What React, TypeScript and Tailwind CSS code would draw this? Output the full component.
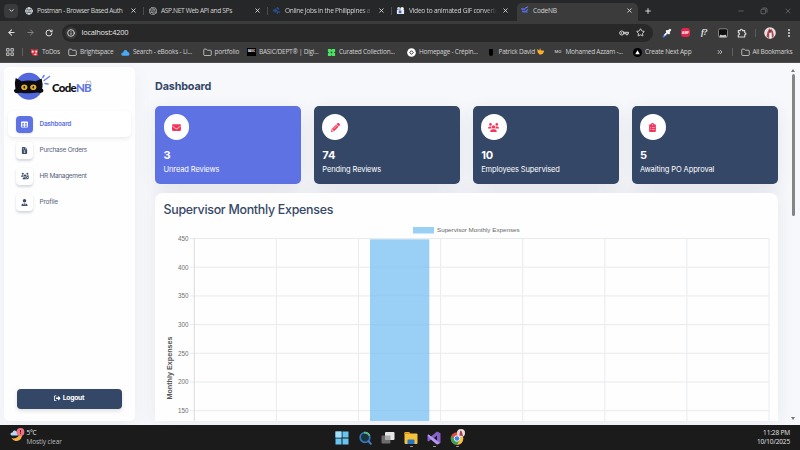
import type { ReactNode } from "react";
import {
  FaEnvelope, FaPencil, FaUsers, FaClipboardList, FaTable, FaFileInvoiceDollar,
  FaUsersGear, FaUserTie, FaRightFromBracket,
} from "react-icons/fa6";
import { SiOpenai } from "react-icons/si";
import {
  ArrowLeft, ArrowRight, ChevronDown, ChevronsRight, EllipsisVertical, Folder, Globe, Info,
  Minus, Plus, RotateCw, Star, X,
} from "lucide-react";

type TabProps = { icon: ReactNode; title: string; fade?: boolean; spacing: string };

function Tab({ icon, title, fade, spacing }: TabProps) {
  return (
    <div className="flex h-full w-[124px] shrink-0 items-center pr-[6px] pl-[5px]">
      <div className="flex size-[9px] shrink-0 items-center justify-center">{icon}</div>
      <div
        className={`ml-[4px] w-[88px] text-[6.6px] leading-[10px] whitespace-nowrap text-[#d4d4d4] ${spacing} ${fade ? "[mask-image:linear-gradient(to_right,black_76px,transparent_88px)]" : ""}`}
      >
        {title}
      </div>
      <X className="ml-auto size-[7px] shrink-0 text-[#e5e5e5]" strokeWidth={2.8} />
    </div>
  );
}

function CatFavicon() {
  return (
    <svg viewBox="0 0 10 10" className="size-[9px]">
      <path d="M1 2.500h6.500L5 4.500H2zM2 5.200h5.500L9 7.300H3z" fill="#5468e8" />
      <path d="M6 2l3-1M7 5l2-1" stroke="#7b8cff" strokeWidth="1" />
    </svg>
  );
}

function TabDivider() {
  return <div className="-mr-px h-[8px] w-px bg-[#4c4c4c]" />;
}

function TabStrip() {
  return (
    <div className="flex h-[21px] items-center bg-[#262728] font-['Open_Sans',sans-serif]">
      <div className="ml-[4px] flex size-[14px] shrink-0 items-center justify-center rounded-[4px] bg-[#3a3b3c]">
        <ChevronDown className="size-[7px] text-[#e3e3e3]" strokeWidth={3} />
      </div>
      <div className="ml-[1px] flex h-full w-[498px] shrink-0 items-center">
        <Tab spacing="tracking-[-0.350px]" title="Postman - Browser Based Auth" icon={<Globe className="size-[8px] text-[#d5dce4]" strokeWidth={3} />} />
        <TabDivider />
        <Tab spacing="tracking-[-0.340px]" title="ASP.NET Web API and SPs" icon={<SiOpenai className="size-[8px] text-[#d0d0d0]" />} />
        <TabDivider />
        <Tab
          fade
          spacing="tracking-[-0.300px]"
          title="Online Jobs in the Philippines a"
          icon={
            <svg viewBox="0 0 10 10" className="size-[9px]"><path d="M1 5h3M3 3l2 2-2 2M6 1v3M8 3H6M6 9V6l3 1" stroke="#284b8c" strokeWidth="1.500" fill="none" /></svg>
          }
        />
        <TabDivider />
        <Tab
          fade
          spacing="tracking-[-0.240px]"
          title="Video to animated GIF converte"
          icon={
            <svg viewBox="0 0 10 10" className="size-[9px]"><rect x="1" y="4" width="8" height="5" rx="1" fill="#e8edf5" /><circle cx="3" cy="2.600" r="1.600" fill="#c6d2e4" /><circle cx="6.800" cy="3" r="2" fill="#f5f5f5" /><path d="M3 5h3v3H3z" fill="#3c6fb5" /></svg>
          }
        />
      </div>
      <div className="mt-[3px] h-[18px] w-[121px] shrink-0 rounded-t-[5px] bg-[#3b3b3c]">
        <div className="-mt-[1.500px] -ml-[2px] h-[18px]">
          <Tab spacing="tracking-[-0.200px]" title="CodeNB" icon={<CatFavicon />} />
        </div>
      </div>
      <Plus className="ml-[6px] size-[8px] text-[#e3e3e3]" strokeWidth={2.800} />
      <Minus className="ml-auto size-[8px] text-[#777]" strokeWidth={2} />
      <svg viewBox="0 0 8 8" className="ml-[15px] size-[8px]" fill="none" stroke="#777" strokeWidth=".8">
        <rect x="1" y="2.200" width="4.600" height="4.600" rx="1" /><path d="M2.500 1h3Q7 1 7 2.500v3" />
      </svg>
      <X className="mr-[8px] ml-[16px] size-[8px] text-[#777]" strokeWidth={2} />
    </div>
  );
}

function Toolbar() {
  return (
    <div className="flex h-[23px] items-center bg-[#3b3b3c] font-['Open_Sans',sans-serif]">
      <ArrowLeft className="ml-[7px] size-[9px] text-[#dedede]" strokeWidth={2.800} />
      <ArrowRight className="ml-[10px] size-[9px] text-[#858585]" strokeWidth={2.600} />
      <RotateCw className="ml-[10px] size-[8px] text-[#dedede]" strokeWidth={3} />
      <div className="ml-[9px] flex h-[18px] w-[591px] shrink-0 items-center rounded-full bg-[#282828]">
        <div className="ml-[3px] flex size-[12px] items-center justify-center rounded-full bg-[#3a3a3b]">
          <Info className="size-[8px] text-[#dedede]" strokeWidth={2.600} />
        </div>
        <span className="mt-[1px] ml-[4.500px] text-[7.400px] tracking-[-0.210px] text-[#e4e4e4]">localhost:4200</span>
        <svg viewBox="0 0 22 12" className="ml-auto h-[6px] w-[10px]" fill="none" stroke="#d6d6d6" strokeWidth="2.200">
          <circle cx="6" cy="6" r="4.500" /><circle cx="6" cy="6" r="0.800" /><path d="M10.500 4.500H21v3h-2v2.500h-3V7.500h-5.500" />
        </svg>
        <Star className="mr-[8px] ml-[7px] size-[9px] text-[#d8d8d8]" strokeWidth={2.500} />
      </div>
      <svg viewBox="0 0 10 10" className="ml-[9px] size-[10px]" fill="none" strokeLinecap="round">
        <path d="M1.700 8.500L5.500 4.700" stroke="#4a78dc" strokeWidth="2.400" />
        <path d="M2.800 7L5.500 4.300" stroke="#fff" strokeWidth="1.400" />
        <path d="M5 3.200L6.900 5.100M6.300 3.700l1.700-1.700" stroke="#f6f6f6" strokeWidth="2.400" />
      </svg>
      <div className="ml-[9px] flex size-[9px] items-center justify-center rounded-[3px] bg-[#e2264c] text-[3.500px] font-bold text-white">ABP</div>
      <span className="ml-[11px] w-[9px] font-['Liberation_Serif',serif] text-[8.500px] leading-none font-bold tracking-[-0.500px] text-[#e2e2e2] italic">f?</span>
      <svg viewBox="0 0 10 10" className="ml-[8px] size-[10px]">
        <rect x="0.500" y="0.800" width="9" height="8.500" rx="1.500" fill="#101010" stroke="#999" strokeWidth="0.800" /><path d="M1.500 9.300c0-4 2-2 3.500-2s3.500-2 3.500 2z" fill="#c4c4c4" />
      </svg>
      <svg viewBox="0 0 10 10" className="ml-[9px] size-[10px]" fill="none" stroke="#dcdcdc" strokeWidth="1.100" strokeLinejoin="round">
        <path d="M1.300 2.600H3.200Q3.300 1.200 4.400 1.200T5.600 2.600H7.700V4.700Q9 4.800 9 5.800T7.700 6.900V9H1.300V7Q2.500 6.900 2.500 5.800T1.300 4.600z" />
      </svg>
      <div className="ml-[8px] h-[8px] w-px bg-[#5c5c5c]" />
      <Avatar />
      <EllipsisVertical className="ml-[8px] size-[10px] text-[#dedede]" strokeWidth={2.800} />
    </div>
  );
}

function Avatar() {
  return (
    <svg viewBox="0 0 12 12" className="ml-[8px] size-[12px]">
      <circle cx="6" cy="6" r="5.800" fill="#eadfdf" />
      <path d="M2.500 9.500L3.500 5 5.500 1l1 4-1 6.400zM7 1.500l2 3 .800 4.500-1.800 2.300z" fill="#b5444f" />
      <path d="M5.300 6h2v5.400h-2z" fill="#f8f5f4" />
      <circle cx="6.300" cy="4" r="1.400" fill="#7d3a3c" />
    </svg>
  );
}

function Bookmark({ icon, children, width, tracking }: { icon: ReactNode; children: ReactNode; width: string; tracking: string }) {
  return (
    <div className={`flex shrink-0 items-center ${width}`}>
      <div className="flex size-[9px] shrink-0 items-center justify-center">{icon}</div>
      <span className={`ml-[3px] text-[6.500px] leading-[10px] whitespace-nowrap text-[#d2d2d2] ${tracking}`}>{children}</span>
    </div>
  );
}

function BookmarkBar() {
  const folder = <Folder className="size-[9px] text-[#d0d0d0]" strokeWidth={2.200} />;
  return (
    <div className="flex h-[19px] items-center border-b border-[#4d4d50] bg-[#3b3b3c] pb-[1.500px] font-['Open_Sans',sans-serif]">
      <svg viewBox="0 0 8 8" className="ml-[6px] size-[8px] shrink-0" fill="none" stroke="#cfcfcf" strokeWidth="0.900">
        <path d="M.6.6h2.500v2.500H.6zM4.900.6h2.500v2.500H4.900zM.6 4.900h2.500v2.500H.6zM4.900 4.900h2.500v2.500H4.900z" />
      </svg>
      <div className="mr-[7px] ml-[8px] h-[8px] w-px shrink-0 bg-[#606060]" />
      <Bookmark width="w-[38px]" tracking="tracking-[-0.300px]" icon={<svg viewBox="0 0 10 10" className="size-[9px]"><path d="M1 1l4 1 4-1-1 4 1 3-3 1-3-1-2-3z" fill="#e33340" /><path d="M2 3h2v2H2zM6 3h2v2H6zM4 7l3-1v2z" fill="#fff" /></svg>}>ToDos</Bookmark>
      <Bookmark width="w-[53px]" tracking="tracking-[-0.220px]" icon={folder}>Brightspace</Bookmark>
      <Bookmark width="w-[81.500px]" tracking="tracking-[-0.210px]" icon={<svg viewBox="0 0 10 10" className="size-[9px]"><path d="M2 8.500C-1 8 .5 4.500 2.500 5 3 1.500 7 1.500 7.300 4.500 10 4.500 10 8.500 8 8.500z" fill="#4aa9f4" /></svg>}>Search - eBooks - Li...</Bookmark>
      <Bookmark width="w-[44.500px]" tracking="tracking-[-0.150px]" icon={folder}>portfolio</Bookmark>
      <Bookmark width="w-[80px]" tracking="tracking-[-0.260px]" icon={<div className="flex h-[8px] w-[9px] items-center justify-center bg-black text-[2.500px] font-bold text-white">BASIC</div>}>BASIC/DEPT® | Digi...</Bookmark>
      <Bookmark width="w-[80px]" tracking="tracking-[-0.250px]" icon={<svg viewBox="0 0 10 10" className="size-[9px]"><path d="M1 1h3.500v1h1V1H9v3.500H8v1h1V9H5.500V8h-1v1H1V5.500h1v-1H1z" fill="#4ce363" /><circle cx="5" cy="5" r="1" fill="#225c2c" /></svg>}>Curated Collection...</Bookmark>
      <Bookmark width="w-[79.500px]" tracking="tracking-[-0.250px]" icon={<svg viewBox="0 0 10 10" className="size-[9px]"><circle cx="5" cy="5" r="4.800" fill="#fff" /><path d="M3 5l2-2 2 2-2 2z" fill="none" stroke="#222" /></svg>}>Homepage - Crépin...</Bookmark>
      <Bookmark width="w-[67px]" tracking="tracking-[-0.240px]" icon={<div className="h-[7px] w-[4px] rounded-b-[2px] bg-black" />}>
        Patrick David
        <svg viewBox="0 0 10 10" className="ml-[2.500px] inline size-[7px] align-[-1px]"><path d="M0 1.500l3 2 1.500-3.500 1 3.500h4l.500 2-2 3-4 1-3-3z" fill="#f4b02e" /></svg>
      </Bookmark>
      <Bookmark width="w-[79.500px]" tracking="tracking-[-0.230px]" icon={<span className="text-[4px] font-bold text-[#b9b9b9]">MO</span>}>Mohamed Azzam -...</Bookmark>
      <Bookmark width="w-[74px]" tracking="tracking-[-0.220px]" icon={<svg viewBox="0 0 10 10" className="size-[9px]"><circle cx="5" cy="5" r="5" fill="#000" /><path d="M5 2.500L7.500 7h-5z" fill="#fff" /></svg>}>Create Next App</Bookmark>
      <ChevronsRight className="ml-auto size-[8px] shrink-0 text-[#d0d0d0]" strokeWidth={2.500} />
      <div className="mr-[8px] ml-[8px] h-[8px] w-px shrink-0 bg-[#606060]" />
      <Bookmark width="w-[59.500px]" tracking="tracking-[-0.270px]" icon={folder}>All Bookmarks</Bookmark>
    </div>
  );
}

function Logo() {
  return (
    <div className="ml-[9px] flex h-[34px] items-start pt-[3px]">
      <svg viewBox="0 0 38 30" className="h-[30px] w-[38px] shrink-0">
        <circle cx="16" cy="16.300" r="13.500" fill="#5468dd" />
        <path d="M2.700 8l6 3.200q7-1.500 14 0l6-2.700q1.300 5 .300 10.500h1q1 3-1 3.500-2 .800-4 0-9 1.500-18 .300Q3 24 1.500 22q-1.500-2 1-3Q1 13 2.700 8z" fill="#0b0b10" />
        <ellipse cx="11.300" cy="17.200" rx="3.100" ry="2.800" fill="#e0ab30" /><ellipse cx="20.300" cy="17.200" rx="3.100" ry="2.800" fill="#e0ab30" />
        <ellipse cx="11.300" cy="17.200" rx=".7" ry="1.300" fill="#111" /><ellipse cx="20.300" cy="17.200" rx=".7" ry="1.300" fill="#111" />
        <path d="M29.800 7.500l1.200-2M31 10.500l5.500-4M32 13.500l3 .600" stroke="#6f80e8" strokeWidth="1.500" strokeLinecap="round" />
      </svg>
      <div className="relative mt-[11px] ml-[1px] font-['Lato',sans-serif] text-[11.500px] leading-[14px] font-black tracking-[-0.700px] text-[#101014]">
        Code<span className="text-[#6377e4]">NB</span>
        <svg viewBox="0 0 8 6" className="absolute -top-[1px] -right-[1px] h-[5px] w-[7px]" fill="none" stroke="#8a8a9c" strokeWidth=".7">
          <path d="M1 4L2 1l1.500 1h1L6 1l1 3M7 4v2" />
        </svg>
      </div>
    </div>
  );
}

function NavItem({ icon, label, active, tracking }: { icon: ReactNode; label: string; active?: boolean; tracking: string }) {
  return (
    <div className={`flex h-[26px] items-center rounded-[5px] pl-[8px] ${active ? "bg-white shadow-[0_2px_4px_rgba(40,50,80,0.090)]" : ""}`}>
      <div className={`flex size-[17px] items-center justify-center rounded-[4px] ${active ? "bg-[#5e72e4] text-white shadow-sm" : "bg-white text-[#3a4a69] shadow-[0_1.500px_2.500px_rgba(30,40,70,0.180)]"}`}>
        {icon}
      </div>
      <span className={`mt-[1.500px] ml-[6.500px] text-[6.500px] ${tracking} ${active ? "font-semibold text-[#5e72e4]" : "text-[#55617a]"}`}>{label}</span>
    </div>
  );
}

function Sidebar() {
  return (
    <aside className="mt-[4px] ml-[4px] flex h-[354px] w-[130.500px] shrink-0 flex-col rounded-[5px] bg-[#fefefe] shadow-[0_6px_20px_rgba(50,60,100,0.050)]">
      <Logo />
      <nav className="mx-[4px] mt-[10px] flex flex-col">
        <NavItem active tracking="tracking-[-0.300px]" label="Dashboard" icon={<FaTable className="size-[7px]" />} />
        <NavItem tracking="tracking-[-0.270px]" label="Purchase Orders" icon={<FaFileInvoiceDollar className="size-[7px]" />} />
        <NavItem tracking="tracking-[-0.310px]" label="HR Management" icon={<FaUsersGear className="size-[8px]" />} />
        <NavItem tracking="tracking-[-0.190px]" label="Profile" icon={<FaUserTie className="size-[7px]" />} />
      </nav>
      <button className="mx-[12.500px] mt-auto mb-[12.500px] flex h-[20px] items-center justify-center gap-[2px] rounded-[4px] bg-[#344767] text-[6.800px] font-bold tracking-[-0.300px] text-white shadow-[0_2px_4px_rgba(0,0,0,0.120)]">
        <FaRightFromBracket className="size-[6.500px]" />
        Logout
      </button>
    </aside>
  );
}

function StatCard({ icon, value, label, color }: { icon: ReactNode; value: string; label: string; color: string }) {
  return (
    <div className={`flex h-[78px] flex-1 flex-col rounded-[5px] pt-[8px] pl-[8.500px] text-white shadow-[0_5px_18px_rgba(40,50,90,0.090)] ${color}`}>
      <div className="flex size-[25.500px] items-center justify-center rounded-full bg-white text-[#f5365c]">{icon}</div>
      <div className="mt-[9px] text-[11px] leading-[13px] font-bold tracking-[-0.100px]">{value}</div>
      <div className="mt-[3.500px] text-[7.500px] leading-[10px] tracking-[-0.110px]">{label}</div>
    </div>
  );
}

const ticks = [450, 400, 350, 300, 250, 200, 150];
const columns = [0, 1, 2, 3, 4, 5, 6, 7];

function ExpenseChart() {
  return (
    <svg viewBox="155 220 623 201" className="h-[201px] w-[623px] font-['Liberation_Sans',sans-serif]">
      <rect x="413" y="227" width="21" height="6.500" fill="#9ad0f5" />
      <text x="437" y="232.300" fontSize="6.250" fill="#666">Supervisor Monthly Expenses</text>
      {ticks.map((tick, i) => (
        <g key={tick}>
          <rect x="190" y={238 + i * 28.7} width="579" height="1" fill="#e8eaee" />
          <text x="188.500" y={240.800 + i * 28.7} fontSize="6.300" textAnchor="end" fill="#707070">{tick}</text>
        </g>
      ))}
      {columns.map((column) => (
        <rect key={column} x={193.800 + column * 82.100} y="238" width="1" height="183" fill={column === 0 ? "#dadbde" : "#e9ebef"} />
      ))}
      <rect x="370" y="239.300" width="59.300" height="181.700" fill="#9ad0f5" />
      {ticks.slice(1).map((tick, i) => (
        <rect key={tick} x="370" y={266.700 + i * 28.700} width="59.300" height="1" fill="#95caf0" />
      ))}
      <text transform="translate(172 368) rotate(-90)" fontSize="7.200" fontWeight="bold" textAnchor="middle" fill="#555">Monthly Expenses</text>
    </svg>
  );
}

function Dashboard() {
  return (
    <main className="ml-[20.500px] flex h-[358px] w-[623px] shrink-0 flex-col">
      <h1 className="mt-[17px] text-[10.800px] leading-[14px] font-bold tracking-[-0.160px] text-[#344767]">Dashboard</h1>
      <div className="mt-[12.300px] flex gap-[12.400px]">
        <StatCard color="bg-[#5e72e4]" value="3" label="Unread Reviews" icon={<FaEnvelope className="size-[9px]" />} />
        <StatCard color="bg-[#344767]" value="74" label="Pending Reviews" icon={<FaPencil className="size-[9px]" />} />
        <StatCard color="bg-[#344767]" value="10" label="Employees Supervised" icon={<FaUsers className="size-[11px]" />} />
        <StatCard color="bg-[#344767]" value="5" label="Awaiting PO Approval" icon={<FaClipboardList className="size-[9px]" />} />
      </div>
      <section className="mt-[8.500px] flex min-h-0 flex-1 flex-col overflow-hidden rounded-t-[8px] bg-[#fefefe] shadow-[0_0_18px_rgba(40,50,90,0.080)]">
        <h2 className="mt-[9px] ml-[8.500px] text-[12.400px] leading-[16px] font-medium tracking-[-0.270px] text-[#344767]">Supervisor Monthly Expenses</h2>
        <div className="mt-auto h-[201px]"><ExpenseChart /></div>
      </section>
    </main>
  );
}

function Scrollbar() {
  return (
    <div className="ml-auto flex w-[12px] shrink-0 flex-col items-center pt-[6px] pr-[2px] pb-[5px]">
      <svg viewBox="0 0 4 3" className="h-[3px] w-[4px]"><path d="M0 3L2 0l2 3z" fill="#777" /></svg>
      <div className="mt-[2px] h-[142px] w-[3px] rounded-full bg-[#858585]" />
      <svg viewBox="0 0 4 3" className="mt-auto h-[3px] w-[4px]"><path d="M0 0l2 3 2-3z" fill="#777" /></svg>
    </div>
  );
}

function TaskIcons() {
  return (
    <div className="flex items-start gap-[9px] pt-[5.500px]">
      <svg viewBox="0 0 14 14" className="size-[14px]"><path d="M.5.5h6v6h-6zM7.500.5h6v6h-6zM.5 7.500h6v6h-6zM7.500 7.500h6v6h-6z" fill="#66c6f2" /><path d="M.5.5h6v6h-6z" fill="#a0e0f8" /></svg>
      <svg viewBox="0 0 14 14" className="size-[14px]"><circle cx="7" cy="6.500" r="4.800" fill="#1c3340" stroke="#3478b8" strokeWidth="1.700" /><path d="M6 1.700a5 5 0 0 1 5.500 3" stroke="#58c084" strokeWidth="1.700" fill="none" /><path d="M10.500 10l2.300 2.800" stroke="#3f83c6" strokeWidth="2" strokeLinecap="round" /></svg>
      <svg viewBox="0 0 14 14" className="size-[14px]"><rect x=".5" y="4.500" width="9" height="8" rx="1" fill="#6c6c6c" /><rect x="4" y="1" width="9.500" height="8" rx="1" fill="#e6e6e6" /><path d="M4 4.500h5.500V9H4z" fill="#a8a8a8" /></svg>
      <TaskApp><path d="M.5 2q0-1 1-1h3.500l1.500 1.500H12.500q1 0 1 1V12q0 1-1 1h-11q-1 0-1-1z" fill="#f5c13a" /><path d="M.5 1.500h5L6.500 3H.5z" fill="#d99218" /><path d="M3.500 13V9.500q0-1 1-1h5q1 0 1 1V13z" fill="#2476c8" /></TaskApp>
      <TaskApp><path d="M10 .5l3.500 1.700v9.600L10 13.500 4 8.500l-2.500 2L.5 9.800V4.200l1-.700 2.500 2z" fill="#8661c9" /><path d="M.5 4.200l1-.700L13 12l-3 1.500L4 8.500z" fill="#b59af0" /><path d="M10 4.500v5L7 7z" fill="#1c1c1c" /></TaskApp>
      <div className="relative">
        <TaskApp><circle cx="7" cy="7.500" r="6.300" fill="#e64b3c" /><path d="M1.500 4.500A6.300 6.300 0 0 0 7 13.800L9.500 9 4 8z" fill="#38a457" /><path d="M7 13.800A6.300 6.300 0 0 0 12.700 5H7l3 4z" fill="#f7c838" /><circle cx="7" cy="7.500" r="2.800" fill="#4186ee" stroke="#fff" strokeWidth=".9" /></TaskApp>
        <svg viewBox="0 0 10 10" className="absolute -top-[1.500px] left-[7px] size-[8px]"><circle cx="5" cy="5" r="5" fill="#eadedf" /><path d="M3 8l1-6 2 1 1.500 6z" fill="#a8404c" /></svg>
      </div>
    </div>
  );
}

function TaskApp({ children }: { children: ReactNode }) {
  return (
    <div className="flex flex-col items-center">
      <svg viewBox="0 0 14 14" className="size-[14px]">{children}</svg>
      <div className="mt-[1.500px] h-[1px] w-[3px] rounded-full bg-[#a0a0a0]" />
    </div>
  );
}

function Taskbar() {
  return (
    <footer className="grid h-[25px] grid-cols-[335px_1fr_120px] bg-[#1b1b1b] font-['Open_Sans',sans-serif] text-[6.500px] text-[#e4e4e4]">
      <div className="flex items-start pt-[3px] pl-[10px]">
        <svg viewBox="0 0 15 15" className="size-[15px]">
          <path d="M11 4.500A5.500 5.500 0 1 1 1.500 10Q7 12 11 4.500z" fill="#f4ad43" />
          <path d="M2 7.500C-.5 7 .5 4 2.500 4.500 3 1.500 7 2 7 4.500 9.500 5 8.500 7.500 7.500 7.500z" fill="#b9d7f5" />
          <circle cx="10.500" cy="4" r="3.900" fill="#ef7280" /><path d="M10.500 2v2.600M10.500 5.300v.8" stroke="#521c24" strokeWidth="1" />
        </svg>
        <div className="mt-[1px] ml-[1.500px] leading-[8.500px]">
          <div className="tracking-[-0.250px]">5°C</div>
          <div className="tracking-[-0.100px] text-[#bdbdbd]">Mostly clear</div>
        </div>
      </div>
      <TaskIcons />
      <div className="pt-[4px] pr-[10px] text-right leading-[8.500px] tracking-[-0.140px]">
        <div>11:28 PM</div>
        <div>10/10/2025</div>
      </div>
    </footer>
  );
}

export default function App() {
  return (
    <div className="flex h-[450px] w-[800px] flex-col overflow-hidden">
      <TabStrip />
      <Toolbar />
      <BookmarkBar />
      <div className="flex h-[362px] overflow-hidden bg-[#f7f8fb] font-['Inter',sans-serif]">
        <Sidebar />
        <Dashboard />
        <Scrollbar />
      </div>
      <Taskbar />
    </div>
  );
}
